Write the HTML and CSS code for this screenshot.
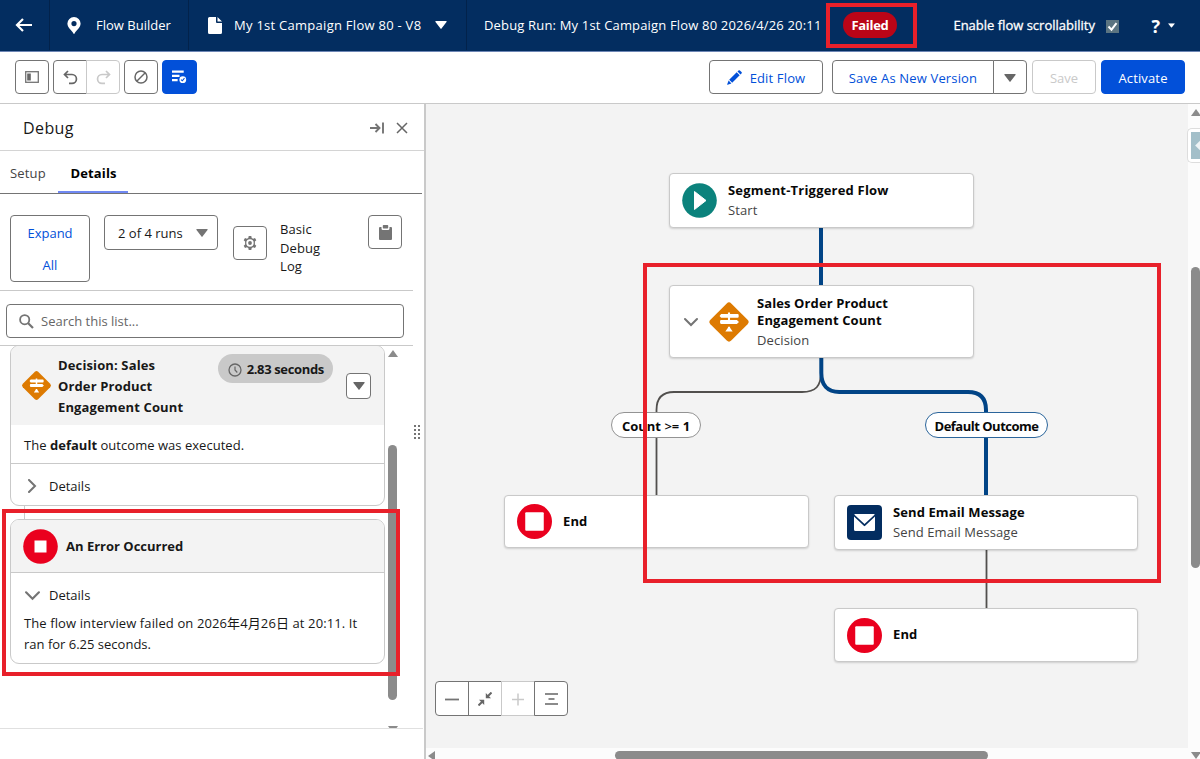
FILE: index.html
```html
<!DOCTYPE html>
<html lang="en">
<head>
    <meta charset="UTF-8">
    <meta name="viewport" content="width=device-width, initial-scale=1.0">
    <title>Flow Builder</title>
    <link rel="stylesheet" href="styles.css">
</head>
<body>

    <!-- shared icons -->
    <svg class="sprite" width="0" height="0">
        <symbol id="decision" viewBox="0 0 40 40">
            <rect x="6" y="6" width="28" height="28" rx="3" fill="#dd7a01" transform="rotate(45 20 20)"/>
            <path d="M19 11h2v1.300h7.200a1 1 0 0 1 1 1v1.700a1 1 0 0 1-1 1H21V18h6.500l2 1.900-2 1.900H12.500a1 1 0 0 1-1-1V19a1 1 0 0 1 1-1H19v-2h-6.500L11 14.200l1.500-1.900H19zM19 24.500h2v1l2.500 3.500h-7l2.500-3.500z" fill="#fff"/>
        </symbol>
        <symbol id="stop" viewBox="0 0 34 34">
            <circle cx="17" cy="17" r="17" fill="#ea001e"/>
            <rect x="8" y="8" width="18" height="18" rx="1" fill="#fff"/>
        </symbol>
        <symbol id="chevron" viewBox="0 0 14 14">
            <path d="M1 4l6 6 6-6" fill="none" stroke="#747474" stroke-width="2" stroke-linecap="round"/>
        </symbol>
        <symbol id="down" viewBox="0 0 12 8">
            <path d="M1 0h10a.6.6 0 0 1 .5 1L6.500 7.500a.6.6 0 0 1-1 0L.5 1a.6.6 0 0 1 .5-1z" fill="currentColor"/>
        </symbol>
    </svg>

    <header class="topbar">
        <div class="top-item back">
            <svg width="18" height="16" viewBox="0 0 18 16"><path d="M17 8H2M8 2L2 8l6 6" fill="none" stroke="#fff" stroke-width="2.200"/></svg>
        </div>
        <div class="top-item app">
            <svg width="14" height="17" viewBox="0 0 14 17"><path fill-rule="evenodd" d="M7 0a6.600 6.600 0 0 1 6.600 6.600C13.600 11 9 13.500 7.600 16.500a.7.7 0 0 1-1.200 0C5 13.500.4 11 .4 6.600A6.600 6.600 0 0 1 7 0zm0 4a2.600 2.600 0 1 0 0 5.200A2.600 2.600 0 0 0 7 4z" fill="#fff"/></svg>
            <span class="app-name">Flow Builder</span>
        </div>
        <div class="top-item flow">
            <svg width="14" height="17" viewBox="0 0 14 17"><path d="M1.500 0H8v5a1 1 0 0 0 1 1h5v9.500a1.500 1.500 0 0 1-1.500 1.500h-11A1.500 1.500 0 0 1 0 15.500v-14A1.500 1.500 0 0 1 1.500 0zM9.500 0L14 4.500H9.500z" fill="#fff"/></svg>
            <span class="flow-name">My 1st Campaign Flow 80 - V8</span>
            <svg class="flow-arrow" width="12" height="8"><use href="#down"/></svg>
        </div>
        <div class="run">
            <span class="run-name">Debug Run: My 1st Campaign Flow 80 2026/4/26 20:11</span>
            <span class="badge">Failed</span>
        </div>
        <div class="top-right">
            <span class="scroll-label">Enable flow scrollability</span>
            <span class="check"><svg width="13" height="13" viewBox="0 0 13 13"><path d="M2.500 6.500l3 3.200 5-6.500" fill="none" stroke="#fff" stroke-width="2"/></svg></span>
            <span class="help">?</span>
            <svg class="help-arrow" width="7" height="5" viewBox="0 0 12 8"><use href="#down"/></svg>
        </div>
    </header>

    <div class="toolbar">
        <button class="btn icon"><svg width="14" height="12" viewBox="0 0 14 12"><rect x=".7" y=".7" width="12.600" height="10.600" fill="none" stroke="#747474" stroke-width="1.300"/><rect x="2.200" y="2.500" width="3.600" height="7" fill="#666"/></svg></button>
        <div class="btn-group">
            <button class="btn icon"><svg width="15" height="15" viewBox="0 0 15 15"><path d="M5 1L1.500 4.500 5 8M2 4.500h7a4.400 4.400 0 0 1 0 8.900H6" fill="none" stroke="#666" stroke-width="1.700"/></svg></button>
            <button class="btn icon off"><svg width="15" height="15" viewBox="0 0 15 15"><path d="M10 1l3.500 3.500L10 8M13 4.500H6a4.400 4.400 0 0 0 0 8.900h3" fill="none" stroke="#c9c9c9" stroke-width="1.700"/></svg></button>
        </div>
        <button class="btn icon"><svg width="14" height="14" viewBox="0 0 14 14"><circle cx="7" cy="7" r="6" fill="none" stroke="#666" stroke-width="1.500"/><path d="M3 11l8-8" stroke="#666" stroke-width="1.500"/></svg></button>
        <button class="btn icon primary debug"><svg width="15" height="14" viewBox="0 0 16 14"><path d="M0 0h12.500v2.400H0zM0 4.500h8v2.400H0zM0 9h6v2.400H0z" fill="#fff"/><circle cx="11.500" cy="9.800" r="3.600" fill="#fff"/><path d="M9.600 9.800l1.400 1.200 2.300-2.800" fill="none" stroke="#0250d9" stroke-width="1.100"/></svg></button>

        <div class="actions">
            <button class="btn edit"><svg width="15" height="15" viewBox="0 0 15 15"><path d="M10.500 1.500l1-1a1 1 0 0 1 1.400 0l1.600 1.600a1 1 0 0 1 0 1.400l-1 1zM9.700 2.300l3 3-7.500 7.500-3-3zM1.600 10.600l2.800 2.800L.6 14.700a.3.3 0 0 1-.4-.4z" fill="#0250d9"/></svg><span>Edit Flow</span></button>
            <div class="btn-group">
                <button class="btn save-as"><span>Save As New Version</span></button>
                <button class="btn icon gray"><svg width="12" height="8"><use href="#down"/></svg></button>
            </div>
            <button class="btn save off"><span>Save</span></button>
            <button class="btn activate primary"><span>Activate</span></button>
        </div>
    </div>

    <main class="content">
        <aside class="panel">
            <div class="panel-head">
                <h2>Debug</h2>
                <svg width="14" height="12" viewBox="0 0 14 12"><path d="M0 6h9M5.500 2l4 4-4 4M13 .5v11" fill="none" stroke="#747474" stroke-width="1.900"/></svg>
                <svg class="close" width="12" height="12" viewBox="0 0 12 12"><path d="M1 1l10 10M11 1L1 11" stroke="#666" stroke-width="1.500"/></svg>
            </div>
            <nav class="tabs">
                <span class="tab">Setup</span>
                <span class="tab active">Details</span>
            </nav>
            <div class="controls">
                <button class="btn expand">Expand<br>All</button>
                <div class="select"><span>2 of 4 runs</span><svg width="12" height="8"><use href="#down"/></svg></div>
                <button class="btn icon gear"><svg width="14" height="14" viewBox="0 0 14 14"><path fill-rule="evenodd" d="M5.700 0h2.600l.4 1.900 1.400.8 1.900-.6 1.300 2.200L11.900 5.600v1.700 1.100l1.400 1.300-1.300 2.200-1.900-.6-1.400.8-.4 1.900H5.700l-.4-1.900-1.400-.8-1.900.6L.7 9.700l1.400-1.300V5.600L.7 4.300 2 2.100l1.900.6 1.400-.8zM7 3.300a3.700 3.700 0 1 0 0 7.400 3.700 3.700 0 0 0 0-7.400z" fill="#747474"/><circle cx="7" cy="7" r="1.900" fill="#747474"/></svg></button>
                <div class="log">Basic<br>Debug<br>Log</div>
                <button class="btn icon clip"><svg width="13" height="15" viewBox="0 0 13 15"><path d="M1 2h1.500v1.500A1.500 1.500 0 0 0 4 5h5a1.500 1.500 0 0 0 1.500-1.500V2H12a1 1 0 0 1 1 1v11a1 1 0 0 1-1 1H1a1 1 0 0 1-1-1V3a1 1 0 0 1 1-1zM4.500 0h4a.7.7 0 0 1 .7.7v2.100a.7.7 0 0 1-.7.7h-4a.7.7 0 0 1-.7-.7V.7a.7.7 0 0 1 .7-.7z" fill="#747474"/></svg></button>
            </div>
            <div class="search-row">
                <div class="search">
                    <svg width="15" height="15" viewBox="0 0 15 15"><circle cx="5.700" cy="5.700" r="4.600" fill="none" stroke="#747474" stroke-width="1.800"/><path d="M9 9l5 5" stroke="#747474" stroke-width="2.200"/></svg>
                    <span>Search this list...</span>
                </div>
            </div>

            <div class="list">
                <div class="cards">
                    <section class="card first">
                        <div class="card-head">
                            <svg class="card-icon" width="31" height="31"><use href="#decision"/></svg>
                            <h3>Decision: Sales<br>Order Product<br>Engagement Count</h3>
                            <span class="time"><svg width="14" height="14" viewBox="0 0 14 14"><circle cx="7" cy="7" r="6" fill="none" stroke="#666" stroke-width="1.300"/><path d="M7 3.500V7l2.300 2.500" fill="none" stroke="#666" stroke-width="1.200"/></svg><b>2.83 seconds</b></span>
                            <button class="btn mini"><svg width="12" height="8"><use href="#down"/></svg></button>
                        </div>
                        <p class="outcome">The <b>default</b> outcome was executed.</p>
                        <div class="details closed"><svg width="14" height="14"><use href="#chevron"/></svg><span>Details</span></div>
                    </section>
                    <div class="link"></div>
                    <section class="card error">
                        <div class="card-head">
                            <svg width="35" height="35" viewBox="0 0 35 35"><circle cx="17.500" cy="17.500" r="17.300" fill="#ea001e"/><rect x="11.500" y="11.500" width="12" height="12" fill="#fff"/></svg>
                            <h3>An Error Occurred</h3>
                        </div>
                        <div class="details"><svg width="15" height="15"><use href="#chevron"/></svg><span>Details</span></div>
                        <p class="message"><span class="fail-time">The flow interview failed on 2026年4月26日 at 20:11. It</span><br><span>ran for 6.25 seconds.</span></p>
                    </section>
                </div>
                <div class="bar">
                    <i class="arrow-up"></i>
                    <i class="thumb"></i>
                    <i class="arrow-down"></i>
                </div>
            </div>
            <svg class="grip" width="8" height="16" viewBox="0 0 8 16"><path d="M1 1h2v2H1zM5 1h2v2H5zM1 5h2v2H1zM5 5h2v2H5zM1 9h2v2H1zM5 9h2v2H5zM1 13h2v2H1zM5 13h2v2H5z" fill="#747474"/></svg>
        </aside>

        <div class="canvas">
            <svg class="edges" width="762" height="644" viewBox="426 104 762 644" fill="none">
                <path d="M821 372c0 14-5 20-19 20H674c-12 0-17.500 6-17.500 18v86M986.500 550v59" stroke="#514f4d" stroke-width="1.800"/>
                <path d="M821 227v59M821.300 357v16c0 12 6 19 18 19H968c12 0 18 6 18 18v86" stroke="#014486" stroke-width="4"/>
            </svg>

            <div class="node start">
                <svg width="35" height="35" viewBox="0 0 35 35"><circle cx="17.500" cy="17.500" r="17.300" fill="#0b827c"/><path d="M12.500 8.500l11.500 9-11.500 9z" fill="#fff" stroke="#fff" stroke-width="1" stroke-linejoin="round"/></svg>
                <div><strong>Segment-Triggered Flow</strong><small>Start</small></div>
            </div>
            <div class="node decision">
                <svg class="toggle" width="14" height="14"><use href="#chevron"/></svg>
                <svg width="42" height="42"><use href="#decision"/></svg>
                <div><strong>Sales Order Product<br>Engagement Count</strong><small>Decision</small></div>
            </div>
            <div class="node end-left">
                <svg width="35" height="35"><use href="#stop"/></svg>
                <div><strong>End</strong></div>
            </div>
            <div class="node email">
                <svg width="35" height="35" viewBox="0 0 35 35"><rect width="35" height="35" rx="4" fill="#032d60"/><path d="M8 9h19a1 1 0 0 1 .8.400L17.500 19 7.200 9.400A1 1 0 0 1 8 9zM7 11.600l9.800 9.200a1 1 0 0 0 1.400 0L28 11.600v12.900a1.500 1.500 0 0 1-1.500 1.500h-18A1.500 1.500 0 0 1 7 24.500z" fill="#fff"/></svg>
                <div><strong>Send Email Message</strong><small>Send Email Message</small></div>
            </div>
            <div class="node end-right">
                <svg width="35" height="35"><use href="#stop"/></svg>
                <div><strong>End</strong></div>
            </div>
            <span class="pill count">Count <span class="op">&gt;=</span> 1</span>
            <span class="pill default">Default Outcome</span>

            <div class="zoom btn-group">
                <button class="btn icon"><svg width="14" height="14" viewBox="0 0 14 14"><path d="M0 7.500h14" stroke="#747474" stroke-width="1.800"/></svg></button>
                <button class="btn icon"><svg width="14" height="14" viewBox="0 0 14 14"><path d="M13.500.5L9 5M.5 13.500L5 9" stroke="#666" stroke-width="2"/><path d="M7.800 1v5.200H13zM6.200 13V7.800H1z" fill="#666"/></svg></button>
                <button class="btn icon off"><svg width="14" height="14" viewBox="0 0 14 14"><path d="M1 7.500h12M7 1.500v12" stroke="#c9c9c9" stroke-width="1.500"/></svg></button>
                <button class="btn icon"><svg width="13" height="12" viewBox="0 0 13 12"><path d="M0 1h13M3.500 6h6M0 11h13" stroke="#666" stroke-width="1.600"/></svg></button>
            </div>

            <div class="vbar"><i class="arrow-up"></i><i class="thumb"></i><i class="arrow-down"></i></div>
            <div class="hbar"><i class="arrow-left"></i><i class="thumb"></i></div>
            <div class="side-tab"><i></i></div>
        </div>
    </main>

    <!-- highlight frames -->
    <div class="mark mark-status"></div>
    <div class="mark mark-path"></div>
    <div class="mark mark-error"></div>

</body>
</html>
```
FILE: styles.css
```css
* {
    box-sizing: border-box;
}
body {
    margin: 0;
    width: 1200px;
    height: 759px;
    overflow: hidden;
    position: relative;
    display: flex;
    flex-direction: column;
    font-family: "Open Sans", "Noto Sans CJK JP", sans-serif;
    font-size: 13px;
    color: #181818;
    background: #fff;
    white-space: nowrap;
}
svg {
    flex: none;
    display: block;
}
.sprite {
    position: absolute;
}
h2, h3, p {
    margin: 0;
}

/* top bar */
.topbar {
    display: flex;
    flex: none;
    height: 52px;
    padding-bottom: 1px;
    background: #032d60;
    border-bottom: 1px solid #6d86b5;
    color: #fff;
}
.top-item {
    display: flex;
    align-items: center;
    border-right: 1px solid #02224b;
}
.back {
    width: 50px;
    padding-left: 15px;
}
.app {
    width: 139px;
    padding-left: 17px;
}
.app-name {
    margin-left: 15px;
}
.flow {
    width: 278px;
    padding-left: 19px;
}
.flow-name {
    margin-left: 12px;
    width: 189px;
    letter-spacing: 0.27px;
}
.flow-arrow {
    margin-left: 12px;
}
.run {
    display: flex;
    align-items: center;
    padding-left: 17px;
}
.run-name {
    width: 338px;
    letter-spacing: 0.17px;
}
.badge {
    width: 54px;
    height: 26px;
    line-height: 26px;
    margin-left: 21px;
    border-radius: 13px;
    background: #ba0517;
    font-weight: 700;
    letter-spacing: -0.3px;
    text-align: center;
}
.top-right {
    display: flex;
    align-items: center;
    margin-left: auto;
    padding-right: 25px;
}
.scroll-label {
    width: 144px;
    margin-top: -1px;
    -webkit-text-stroke: 0.3px #fff;
}
.check {
    width: 13px;
    height: 13px;
    margin: 3px 0 0 9px;
    background: #5b7481;
}
.help {
    margin: 2px 0 0 32px;
    font-size: 18px;
    font-weight: 700;
}
.help-arrow {
    margin: 1px 0 0 8px;
}

/* buttons */
.btn {
    display: flex;
    align-items: center;
    justify-content: center;
    height: 34px;
    padding: 0;
    font: inherit;
    letter-spacing: inherit;
    color: #0250d9;
    background: #fff;
    border: 1px solid #747474;
    border-radius: 4px;
}
.icon {
    width: 34px;
}
.gray, .mini {
    color: #666;
}
.off {
    color: #c9c9c9;
    border-color: #c9c9c9;
}
.primary {
    color: #fff;
    background: #0250d9;
    border-color: #0250d9;
}
.btn-group {
    display: flex;
}
.btn-group .btn:not(:first-child) {
    margin-left: -1px;
    border-top-left-radius: 0;
    border-bottom-left-radius: 0;
}
.btn-group .btn:not(:last-child) {
    border-top-right-radius: 0;
    border-bottom-right-radius: 0;
}

/* toolbar */
.toolbar {
    display: flex;
    flex: none;
    gap: 4px;
    height: 52px;
    padding: 8px 15px 0;
    border-bottom: 1px solid #c9c9c9;
}
.debug {
    width: 35px;
}
.actions {
    display: flex;
    margin-left: auto;
}
.actions .btn {
    padding-top: 1px;
}
.edit {
    width: 114px;
    margin-right: 9px;
    gap: 8px;
    letter-spacing: 0.15px;
}
.save-as {
    width: 162px;
    letter-spacing: 0.15px;
}
.save {
    width: 64px;
    margin: 0 5px;
}
.activate {
    width: 84px;
    letter-spacing: 0.15px;
}

.content {
    display: flex;
    flex: 1;
    min-height: 0;
}

/* debug panel */
.panel {
    position: relative;
    flex: none;
    width: 426px;
    border-right: 2px solid #c9c9c9;
}
.panel-head {
    display: flex;
    align-items: center;
    height: 47px;
    padding: 1px 16px 0 23px;
    border-bottom: 1px solid #d4d4d4;
}
.panel-head h2 {
    flex: 1;
    font-size: 16px;
    font-weight: 400;
    letter-spacing: 0.4px;
}
.close {
    margin-left: 12px;
}
.tabs {
    display: flex;
    height: 43px;
    margin-right: 2px;
    line-height: 45px;
    border-bottom: 1px solid #747474;
}
.tab {
    padding-left: 10px;
    width: 58px;
    color: #444;
    letter-spacing: 0.15px;
}
.tab.active {
    width: 70px;
    padding: 0 0 0 1px;
    text-align: center;
    font-weight: 700;
    color: #000;
    border-bottom: 2px solid #7088f2;
}
.controls {
    display: flex;
    align-items: flex-start;
    width: 413px;
    height: 97px;
    padding: 21px 11px 0 10px;
    border-bottom: 1px solid #c9c9c9;
}
.expand {
    width: 80px;
    height: 67px;
    line-height: 32px;
    text-align: center;
}
.select {
    display: flex;
    align-items: center;
    justify-content: space-between;
    width: 114px;
    height: 35px;
    margin-left: 14px;
    padding: 0 9px 0 13px;
    border: 1px solid #747474;
    border-radius: 4px;
}
.select svg {
    color: #747474;
}
.gear {
    margin: 11px 0 0 15px;
}
.log {
    margin: 5px auto 0 13px;
    line-height: 18.5px;
    letter-spacing: 0.1px;
}
.search-row {
    width: 413px;
    height: 55px;
    padding: 13px 9px 0 6px;
    border-bottom: 1px solid #c9c9c9;
}
.search {
    display: flex;
    align-items: center;
    height: 34px;
    padding-left: 12px;
    gap: 7px;
    border: 1px solid #747474;
    border-radius: 4px;
    color: #666;
}
.list {
    display: flex;
    width: 423px;
    height: 383px;
    border-bottom: 1px solid #e0e0e0;
}
.cards {
    width: 375px;
    margin-left: 10px;
    margin-top: -1px;
}
.card {
    border: 1px solid #c9c9c9;
    border-radius: 9px;
    overflow: hidden;
}
.first {
    height: 161px;
}
.card-head {
    display: flex;
    background: #f3f3f3;
}
.card-head h3 {
    font-size: 13px;
    line-height: 21px;
    letter-spacing: 0.13px;
}
.first .card-head {
    height: 79px;
    padding: 8px 13px 0 10px;
}
.card-icon {
    margin-top: 16px;
}
.first h3 {
    width: 161px;
    margin-left: 6px;
    padding-top: 1px;
}
.time {
    display: flex;
    align-items: center;
    justify-content: center;
    gap: 5px;
    width: 115px;
    height: 29px;
    border-radius: 15px;
    background: #c9c9c9;
    letter-spacing: -0.35px;
}
.time svg {
    margin-top: 2px;
}
.mini {
    width: 25px;
    height: 26px;
    margin: 19px 0 0 13px;
}
.outcome {
    height: 39px;
    padding-left: 13px;
    line-height: 40px;
    border-bottom: 1px solid #c9c9c9;
    letter-spacing: 0.03px;
}
.details {
    display: flex;
    align-items: center;
    height: 44px;
    padding-left: 14px;
    gap: 9px;
}
.closed svg {
    transform: rotate(-90deg);
}
.closed {
    gap: 10px;
}
.link {
    height: 13px;
    margin-left: 14px;
    border-left: 1px solid #c9c9c9;
}
.error {
    height: 145px;
}
.error .card-head {
    align-items: center;
    height: 53px;
    padding-left: 12px;
    gap: 8px;
    border-bottom: 1px solid #c9c9c9;
}
.error h3 {
    letter-spacing: 0;
}
.message {
    margin-top: -4px;
    padding-left: 13px;
    line-height: 21px;
}
.message span {
    display: inline-block;
    height: 21px;
}
.fail-time {
    letter-spacing: 0.11px;
}
.grip {
    position: absolute;
    left: 413px;
    top: 320px;
}

/* scrollbars */
.bar {
    position: relative;
    width: 11px;
    margin-left: 3px;
    overflow: hidden;
}
.bar i, .vbar i, .hbar i {
    position: absolute;
}
.thumb {
    background: #8b8b8b;
    border-radius: 5px;
}
.arrow-up, .arrow-down {
    left: 0;
    border: 5px solid transparent;
}
.arrow-up {
    border-top: 0;
    border-bottom: 7px solid #8b8b8b;
}
.arrow-down {
    border-bottom: 0;
    border-top: 7px solid #8b8b8b;
}
.bar .arrow-up {
    top: 4px;
}
.bar .thumb {
    top: 99px;
    width: 9px;
    height: 255px;
}
.bar .arrow-down {
    top: 380px;
}

/* canvas */
.canvas {
    position: relative;
    flex: 1;
    background: #f3f3f3;
}
.edges {
    position: absolute;
    left: 0;
    top: 0;
}
.node {
    position: absolute;
    display: flex;
    align-items: center;
    width: 305px;
    padding-left: 12px;
    gap: 11px;
    background: #fff;
    border: 1px solid #c9c9c9;
    border-radius: 4px;
    box-shadow: 0 1px 2px rgba(0, 0, 0, 0.15);
}
.node strong {
    display: block;
    line-height: 17px;
    letter-spacing: 0.1px;
    color: #080808;
}
.node small {
    display: block;
    font-size: 13px;
    line-height: 17px;
    margin-top: 3px;
    color: #444;
    letter-spacing: 0.1px;
}
.start {
    left: 243px;
    top: 69px;
    height: 55px;
}
.start strong {
    letter-spacing: 0.2px;
}
.decision {
    left: 243px;
    top: 181px;
    height: 73px;
    padding-left: 14px;
    gap: 7px;
}
.toggle {
    margin-right: 3px;
}
.end-left {
    left: 78px;
    top: 391px;
    height: 53px;
}
.email {
    left: 408px;
    top: 391px;
    width: 304px;
    height: 55px;
}
.end-right {
    left: 408px;
    top: 504px;
    width: 304px;
    height: 54px;
}
.end-left strong, .end-right strong {
    margin-top: -1px;
}
.pill {
    position: absolute;
    top: 308px;
    height: 26px;
    line-height: 26px;
    border: 1px solid #939393;
    border-radius: 13px;
    background: #fff;
    font-weight: 700;
    text-align: center;
    color: #080808;
}
.count {
    left: 185px;
    width: 90px;
}
.op {
    font-weight: 600;
}
.default {
    left: 499px;
    width: 123px;
    border-color: #2b659b;
    letter-spacing: -0.5px;
}
.zoom {
    position: absolute;
    left: 9px;
    top: 577px;
}
.zoom .btn {
    height: 35px;
}
.vbar {
    position: absolute;
    right: 0;
    top: 0;
    width: 12px;
    height: 655px;
    background: #fcfcfc;
}
.vbar .arrow-up {
    left: 3px;
    top: 5px;
}
.vbar .thumb {
    left: 3px;
    top: 163px;
    width: 9px;
    height: 301px;
}
.vbar .arrow-down {
    left: 3px;
    top: 648px;
}
.hbar {
    position: absolute;
    left: 0;
    bottom: 0;
    width: 762px;
    height: 11px;
    background: #fcfcfc;
}
.arrow-left {
    left: 2px;
    top: 3px;
    border: 5px solid transparent;
    border-left: 0;
    border-right: 7px solid #8b8b8b;
}
.hbar .thumb {
    left: 189px;
    top: 3px;
    width: 373px;
    height: 9px;
}
.side-tab {
    position: absolute;
    right: 0;
    top: 24px;
    width: 13px;
    height: 35px;
    padding: 3px 0 4px 3px;
    overflow: hidden;
    background: #fff;
    border: 1px solid #ddd;
    border-right: 0;
    border-radius: 5px 0 0 5px;
}
.side-tab i {
    display: block;
    height: 27px;
    background: #a3bfc9;
    position: relative;
}
.side-tab i::after {
    content: "";
    position: absolute;
    left: 6px;
    top: 9px;
    width: 9px;
    height: 9px;
    background: #eef3f5;
    transform: rotate(45deg);
}

/* red frames drawn over the page */
.mark {
    position: absolute;
    border: 4px solid #e8202a;
}
.mark-status {
    left: 826px;
    top: 3px;
    width: 91px;
    height: 45px;
}
.mark-path {
    left: 643px;
    top: 263px;
    width: 518px;
    height: 320px;
}
.mark-error {
    left: 2px;
    top: 509px;
    width: 398px;
    height: 167px;
}
```
